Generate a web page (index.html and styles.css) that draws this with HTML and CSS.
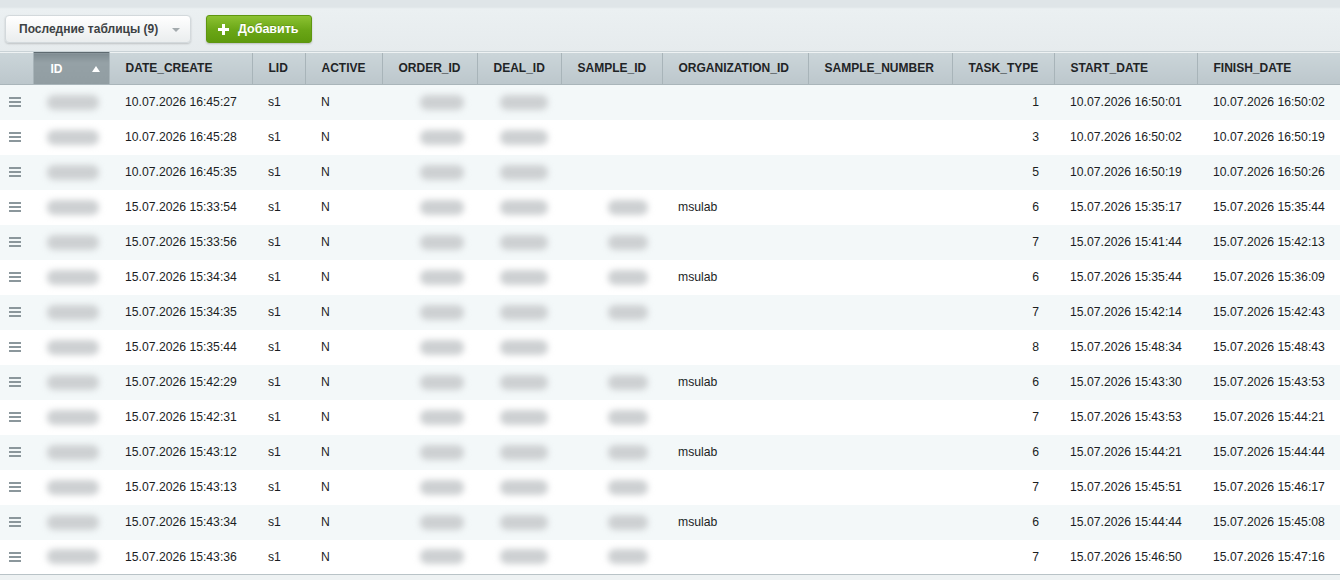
FILE: index.html
```html
<!DOCTYPE html>
<html>
<head>
<meta charset="utf-8">
<link rel="stylesheet" href="styles.css">
</head>
<body>
<div class="toolbar">
  <button class="btn-select">Последние таблицы (9)<span class="caret"></span></button>
  <button class="btn-add"><svg class="plus" width="11" height="11" viewBox="0 0 11 11"><rect x="4" y="0" width="3" height="11" fill="#fff"/><rect x="0" y="4" width="11" height="3" fill="#fff"/></svg>Добавить</button>
</div>
<table class="grid">
  <colgroup>
    <col style="width:33px"><col style="width:76px"><col style="width:143px"><col style="width:53px"><col style="width:77px"><col style="width:95px"><col style="width:84px"><col style="width:101px"><col style="width:146px"><col style="width:144px"><col style="width:102px"><col style="width:143px"><col style="width:143px">
  </colgroup>
  <thead>
    <tr>
      <th class="h-menu"></th>
      <th class="h-sorted">ID<span class="sort-arrow"></span></th>
      <th>DATE_CREATE</th>
      <th>LID</th>
      <th>ACTIVE</th>
      <th>ORDER_ID</th>
      <th>DEAL_ID</th>
      <th>SAMPLE_ID</th>
      <th>ORGANIZATION_ID</th>
      <th>SAMPLE_NUMBER</th>
      <th>TASK_TYPE</th>
      <th>START_DATE</th>
      <th>FINISH_DATE</th>
    </tr>
  </thead>
  <tbody id="rows"></tbody>
</table>
<div class="footer"></div>
<script src="app.js"></script>
</body>
</html>
```
FILE: app.js
```js
var data = [
  ["10.07.2026 16:45:27", 0, "", "1", "10.07.2026 16:50:01", "10.07.2026 16:50:02"],
  ["10.07.2026 16:45:28", 0, "", "3", "10.07.2026 16:50:02", "10.07.2026 16:50:19"],
  ["10.07.2026 16:45:35", 0, "", "5", "10.07.2026 16:50:19", "10.07.2026 16:50:26"],
  ["15.07.2026 15:33:54", 1, "msulab", "6", "15.07.2026 15:35:17", "15.07.2026 15:35:44"],
  ["15.07.2026 15:33:56", 1, "", "7", "15.07.2026 15:41:44", "15.07.2026 15:42:13"],
  ["15.07.2026 15:34:34", 1, "msulab", "6", "15.07.2026 15:35:44", "15.07.2026 15:36:09"],
  ["15.07.2026 15:34:35", 1, "", "7", "15.07.2026 15:42:14", "15.07.2026 15:42:43"],
  ["15.07.2026 15:35:44", 0, "", "8", "15.07.2026 15:48:34", "15.07.2026 15:48:43"],
  ["15.07.2026 15:42:29", 1, "msulab", "6", "15.07.2026 15:43:30", "15.07.2026 15:43:53"],
  ["15.07.2026 15:42:31", 1, "", "7", "15.07.2026 15:43:53", "15.07.2026 15:44:21"],
  ["15.07.2026 15:43:12", 1, "msulab", "6", "15.07.2026 15:44:21", "15.07.2026 15:44:44"],
  ["15.07.2026 15:43:13", 1, "", "7", "15.07.2026 15:45:51", "15.07.2026 15:46:17"],
  ["15.07.2026 15:43:34", 1, "msulab", "6", "15.07.2026 15:44:44", "15.07.2026 15:45:08"],
  ["15.07.2026 15:43:36", 1, "", "7", "15.07.2026 15:46:50", "15.07.2026 15:47:16"]
];
var tb = document.getElementById("rows");
var html = "";
data.forEach(function (r) {
  html += '<tr>' +
    '<td class="c-menu"><span class="burger"><i></i><i></i><i></i></span></td>' +
    '<td><span class="redact r-id"></span></td>' +
    '<td>' + r[0] + '</td>' +
    '<td>s1</td>' +
    '<td>N</td>' +
    '<td><span class="redact r-order"></span></td>' +
    '<td><span class="redact r-deal"></span></td>' +
    '<td>' + (r[1] ? '<span class="redact r-sample"></span>' : '') + '</td>' +
    '<td>' + r[2] + '</td>' +
    '<td></td>' +
    '<td class="num">' + r[3] + '</td>' +
    '<td>' + r[4] + '</td>' +
    '<td>' + r[5] + '</td>' +
    '</tr>';
});
tb.innerHTML = html;
```
FILE: styles.css
```css
html, body {
  margin: 0;
  padding: 0;
  background: #eef2f3;
  font-family: "Liberation Sans", Arial, sans-serif;
  overflow: hidden;
}

.toolbar {
  height: 52px;
  box-sizing: border-box;
  padding: 15px 0 0 5px;
  display: flex;
  gap: 15px;
  align-items: flex-start;
  background: linear-gradient(#dfe5e8 0, #dfe5e8 7px, #ebf0f2 9px, #e6ebed 100%);
  border-bottom: 1px solid #c9d2d6;
}

.btn-select {
  height: 28px;
  width: 186px;
  box-sizing: border-box;
  padding: 0 0 0 13px;
  text-align: left;
  border: 1px solid #d3d9dc;
  border-radius: 4px;
  background: linear-gradient(#ffffff, #eaedee);
  box-shadow: 0 1px 2px rgba(0, 0, 0, 0.18);
  font-family: "Liberation Sans", Arial, sans-serif;
  font-weight: bold;
  font-size: 12px;
  color: #3d4244;
  position: relative;
}

.caret {
  position: absolute;
  right: 10px;
  top: 12px;
  width: 0;
  height: 0;
  border-left: 4px solid transparent;
  border-right: 4px solid transparent;
  border-top: 4px solid #a3aaad;
}

.btn-add {
  height: 28px;
  width: 106px;
  box-sizing: border-box;
  display: flex;
  align-items: center;
  gap: 9px;
  padding: 0 0 0 11px;
  border: 1px solid #5e9610;
  border-radius: 3px;
  background: linear-gradient(#8cc232, #6aa616 55%, #5e9a0d);
  box-shadow: 0 1px 2px rgba(0, 0, 0, 0.2);
  font-family: "Liberation Sans", Arial, sans-serif;
  font-weight: bold;
  font-size: 12.5px;
  color: #fff;
  text-shadow: 0 -1px 0 rgba(0, 0, 0, 0.15);
}

.grid {
  table-layout: fixed;
  border-collapse: collapse;
  width: 1340px;
  font-size: 12.2px;
  color: #1b1e1f;
}

.grid th {
  height: 32px;
  box-sizing: border-box;
  padding: 0 0 0 16px;
  text-align: left;
  font-size: 12px;
  font-weight: bold;
  color: #1f2426;
  background: linear-gradient(#cbd5d9, #bcc7cc);
  border-left: 1px solid #e1e7ea;
  border-right: 1px solid #a8b4b9;
  border-bottom: 1px solid #a9b5ba;
  white-space: nowrap;
}

.grid th.h-menu {
  border-left: none;
}

.grid th.h-sorted {
  position: relative;
  padding-left: 17px;
  color: #fff;
  background: linear-gradient(#7f8c92, #95a1a6 30%, #919da2);
  border-top: 1px solid #5e6a70;
}

.sort-arrow {
  position: absolute;
  right: 9px;
  top: 13px;
  width: 0;
  height: 0;
  border-left: 4px solid transparent;
  border-right: 4px solid transparent;
  border-bottom: 6px solid #fff;
}

.grid td {
  height: 35px;
  box-sizing: border-box;
  padding: 0 0 0 16px;
  white-space: nowrap;
}

.grid tbody tr:nth-child(odd) td {
  background: #f3f8f9;
}

.grid tbody tr:nth-child(even) td {
  background: #ffffff;
}

.grid tbody tr:last-child td {
  border-bottom: 1px solid #b9c3c7;
}

.grid td.c-menu {
  padding: 0 0 0 9px;
}

.grid td.num {
  text-align: right;
  padding: 0 15px 0 0;
}

.burger {
  display: flex;
  flex-direction: column;
  gap: 2px;
  width: 12px;
}

.burger i {
  display: block;
  height: 2px;
  background: #8b979c;
}

.redact {
  display: block;
  height: 15px;
  border-radius: 7px;
  background: #cdd0d2;
  filter: blur(3px);
}

.r-id { width: 52px; margin-left: -2px; }
.r-order { width: 44px; margin-left: 22px; }
.r-deal { width: 48px; margin-left: 7px; }
.r-sample { width: 40px; margin-left: 31px; }

.footer {
  height: 10px;
}
```
